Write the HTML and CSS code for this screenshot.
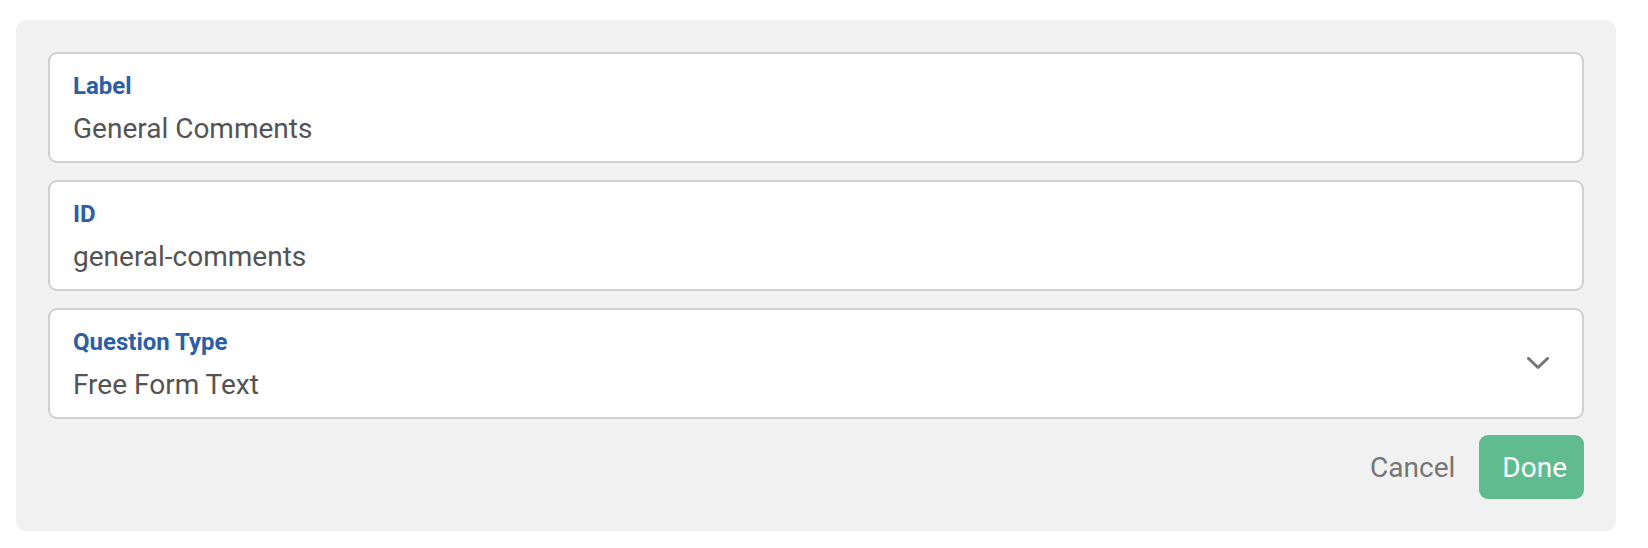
FILE: index.html
```html
<!DOCTYPE html>
<html lang="en">
<head>
<meta charset="utf-8">
<title>Question editor</title>
<link rel="stylesheet" href="styles.css">
</head>
<body>
<div class="panel">
  <div class="fields">
    <div class="field">
      <div class="field-body">
        <div class="field-label">Label</div>
        <div class="field-value">General Comments</div>
      </div>
    </div>
    <div class="field">
      <div class="field-body">
        <div class="field-label">ID</div>
        <div class="field-value">general-comments</div>
      </div>
    </div>
    <div class="field field-select">
      <div class="field-body">
        <div class="field-label">Question Type</div>
        <div class="field-value">Free Form Text</div>
      </div>
      <svg class="chevron" width="22" height="13" viewBox="0 0 22 13" aria-hidden="true">
        <path d="M1.5 1.5 L11 10.5 L20.5 1.5" fill="none" stroke="#757575" stroke-width="3" stroke-linecap="round" stroke-linejoin="round"/>
      </svg>
    </div>
  </div>
  <div class="actions">
    <button class="btn btn-cancel">Cancel</button>
    <button class="btn btn-done">Done</button>
  </div>
</div>
</body>
</html>
```
FILE: styles.css
```css
* { box-sizing: border-box; }
html, body { background: #ffffff; }
body {
  margin: 20px 32px 16px 16px;
  font-family: Roboto, "Liberation Sans", Arial, sans-serif;
}
.panel {
  background: #f1f1f1;
  border-radius: 10px;
  padding: 32px;
  display: flex;
  flex-direction: column;
  gap: 16px;
}
.fields {
  display: flex;
  flex-direction: column;
  gap: 17px;
}
.field {
  height: 111px;
  background: #ffffff;
  border: 2px solid #cfcfd4;
  border-radius: 9px;
  padding: 14px 23px 11px 23px;
  display: flex;
  align-items: center;
}
.field-body {
  flex: 1;
  display: flex;
  flex-direction: column;
  align-self: flex-start;
}
.field-label {
  color: #2c5ea8;
  font-weight: 700;
  font-size: 24px;
  line-height: 36px;
  margin-bottom: 5px;
}
.field-value {
  color: #545454;
  font-size: 28px;
  line-height: 40px;
}
.chevron {
  margin-right: 10px;
  margin-top: -4px;
}
.actions {
  display: flex;
  justify-content: flex-end;
  align-items: center;
}
.btn {
  font-family: Roboto, "Liberation Sans", Arial, sans-serif;
  font-size: 28px;
  border: none;
  height: 64px;
  border-radius: 9px;
  cursor: pointer;
}
.btn-cancel {
  background: transparent;
  color: #767676;
  padding: 0 24px;
}
.btn-done {
  background: #60bc8f;
  color: #ffffff;
  padding: 0 17px 0 23px;
}
```
